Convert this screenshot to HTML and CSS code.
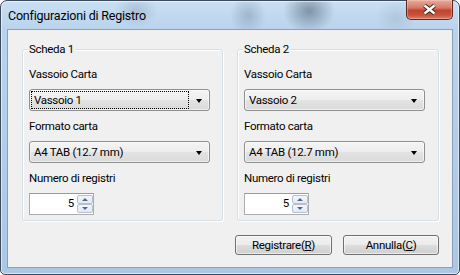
FILE: index.html
```html
<!DOCTYPE html>
<html lang="it">

<head>
  <meta charset="UTF-8">
  <meta name="viewport" content="width=device-width, initial-scale=1.0">
  <title>Configurazioni di Registro</title>
  <link rel="stylesheet" href="styles.css">
</head>

<body>
  <div class="window">
    <div class="titlebar">
      <span class="title">Configurazioni di Registro</span>
      <button class="close">
        <svg width="47" height="19" viewBox="0 0 47 19">
          <path d="M18.5 5.5 L28.5 13.5 M28.5 5.5 L18.5 13.5" stroke="#3b2520" stroke-width="4.2" fill="none" />
          <path d="M18.5 5.5 L28.5 13.5 M28.5 5.5 L18.5 13.5" stroke="#ffffff" stroke-width="2.4" fill="none" />
        </svg>
      </button>
    </div>

    <div class="client">
      <div class="groups">
        <div class="group g1">
          <span class="group-title">Scheda 1</span>
          <div class="lbl">Vassoio Carta</div>
          <div class="combo">
            <span class="combo-text focus">Vassoio 1</span>
            <span class="combo-btn"><span class="arrow"></span></span>
          </div>
          <div class="lbl">Formato carta</div>
          <div class="combo">
            <span class="combo-text">A4 TAB (12.7 mm)</span>
            <span class="combo-btn"><span class="arrow"></span></span>
          </div>
          <div class="lbl">Numero di registri</div>
          <div class="spin">
            <span class="spin-val">5</span>
            <span class="spin-btns">
              <span class="spin-up"><span class="tri-up"></span></span>
              <span class="spin-down"><span class="tri-down"></span></span>
            </span>
          </div>
        </div>

        <div class="group g2">
          <span class="group-title">Scheda 2</span>
          <div class="lbl">Vassoio Carta</div>
          <div class="combo">
            <span class="combo-text">Vassoio 2</span>
            <span class="combo-btn"><span class="arrow"></span></span>
          </div>
          <div class="lbl">Formato carta</div>
          <div class="combo">
            <span class="combo-text">A4 TAB (12.7 mm)</span>
            <span class="combo-btn"><span class="arrow"></span></span>
          </div>
          <div class="lbl">Numero di registri</div>
          <div class="spin">
            <span class="spin-val">5</span>
            <span class="spin-btns">
              <span class="spin-up"><span class="tri-up"></span></span>
              <span class="spin-down"><span class="tri-down"></span></span>
            </span>
          </div>
        </div>
      </div>

      <div class="buttons">
        <button class="btn btn-ok">Registrare(<u>R</u>)</button>
        <button class="btn btn-cancel">Annulla(<u>C</u>)</button>
      </div>
    </div>
  </div>
</body>

</html>
```

FILE: styles.css
```css
* {
  box-sizing: border-box;
}

body {
  margin: 0;
  font-family: Roboto, "Noto Sans", sans-serif;
  font-size: 11.5px;
  letter-spacing: -0.3px;
  color: #000;
}

/* finestra aero */
.window {
  width: 460px;
  height: 275px;
  border: 1px solid #3d4b5b;
  border-radius: 7px 7px 5px 5px;
  padding: 0 6px 6px 6px;
  display: flex;
  flex-direction: column;
  box-shadow: inset 0 0 0 1px rgba(255, 255, 255, 0.55);
  background:
    radial-gradient(ellipse 22px 16px at 135px 10px, rgba(90, 110, 135, 0.25), transparent),
    radial-gradient(ellipse 26px 22px at 308px 10px, rgba(45, 60, 80, 0.45), transparent),
    radial-gradient(ellipse 18px 20px at 247px 14px, rgba(80, 100, 125, 0.3), transparent),
    radial-gradient(ellipse 20px 18px at 395px 16px, rgba(110, 130, 150, 0.2), transparent),
    linear-gradient(180deg, #c9dff3 0%, #b9d3ec 30px, #aac7e6 100%);
}

.titlebar {
  height: 28px;
  display: flex;
  justify-content: space-between;
  align-items: flex-start;
}

.title {
  padding: 6px 0 0 1px;
  font-size: 12.5px;
  letter-spacing: -0.2px;
  line-height: 17px;
  color: #000;
}

.close {
  width: 47px;
  height: 20px;
  margin-top: -1px;
  padding: 0;
  border: 1px solid #5a2a22;
  border-top: none;
  border-radius: 0 0 5px 5px;
  background: linear-gradient(180deg, #e9ab9c 0%, #d77a68 40%, #c2432f 55%, #c9533d 80%, #d9826c 100%);
  box-shadow: inset 0 0 0 1px rgba(255, 220, 210, 0.35);
  display: block;
}

.close svg {
  display: block;
  margin: -1px 0 0 -1px;
}

.client {
  flex: 1;
  background: #f0f0f0;
  border: 1px solid #8d9fb4;
  padding: 19px 13px 0 14px;
  display: flex;
  flex-direction: column;
}

.groups {
  display: flex;
  gap: 14px;
}

.group {
  position: relative;
  height: 172px;
  border: 1px solid #d5dfe5;
  border-radius: 3px;
  box-shadow: inset 1px 1px 0 #fff, 1px 1px 0 #fff;
  padding: 17px 0 0 6px;
}

.g1 {
  width: 201px;
}

.g2 {
  width: 202px;
}

.group-title {
  position: absolute;
  top: -8px;
  left: 5px;
  padding: 0 1px;
  line-height: 15px;
  background: #f0f0f0;
}

.lbl {
  line-height: 15px;
  margin-bottom: 7px;
}

/* combo box */
.combo {
  width: 181px;
  height: 22px;
  margin-bottom: 8px;
  border: 1px solid #8e8f8f;
  border-radius: 3px;
  background: linear-gradient(180deg, #f4f4f4 0%, #ededed 50%, #e3e3e3 51%, #dadada 100%);
  box-shadow: inset 0 0 0 1px rgba(255, 255, 255, 0.6);
  display: flex;
  padding: 1px;
}

.combo-text {
  flex: 1;
  height: 18px;
  line-height: 16px;
  padding-left: 2px;
  border: 1px solid transparent;
  white-space: nowrap;
}

.combo-text.focus {
  border: 1px dotted #000;
}

.combo-btn {
  width: 19px;
  display: flex;
  align-items: center;
  justify-content: center;
}

.arrow {
  width: 0;
  height: 0;
  border-left: 3.5px solid transparent;
  border-right: 3.5px solid transparent;
  border-top: 4px solid #000;
  margin-top: 1px;
}

/* numero */
.spin {
  width: 65px;
  height: 22px;
  border: 1px solid #abadb3;
  border-top-color: #999ba1;
  background: #fff;
  display: flex;
}

.spin-val {
  flex: 1;
  text-align: right;
  line-height: 19px;
  padding-right: 3px;
}

.spin-btns {
  width: 16px;
  display: flex;
  flex-direction: column;
  padding: 1px 0 1px 0;
}

.spin-up,
.spin-down {
  flex: 1;
  border: 1px solid #b3c0d3;
  border-radius: 2px;
  background: linear-gradient(180deg, #f4f6f9 0%, #e4e9f0 100%);
  display: flex;
  align-items: center;
  justify-content: center;
}

.tri-up {
  border-left: 3px solid transparent;
  border-right: 3px solid transparent;
  border-bottom: 3px solid #4e6a95;
}

.tri-down {
  border-left: 3px solid transparent;
  border-right: 3px solid transparent;
  border-top: 3px solid #4e6a95;
}

/* pulsanti */
.buttons {
  display: flex;
  justify-content: flex-end;
  gap: 11px;
  margin-top: 14px;
}

.btn {
  height: 20px;
  padding: 0;
  font-family: Roboto, "Noto Sans", sans-serif;
  font-size: 11.5px;
  letter-spacing: -0.3px;
  line-height: 16px;
  color: #000;
  border: 1px solid #707070;
  border-radius: 3px;
  background: linear-gradient(180deg, #f2f2f2 0%, #ebebeb 50%, #dddddd 51%, #cfcfcf 100%);
  box-shadow: inset 0 0 0 1px rgba(255, 255, 255, 0.6);
}

.btn-ok {
  width: 97px;
}

.btn-cancel {
  width: 96px;
}
```
